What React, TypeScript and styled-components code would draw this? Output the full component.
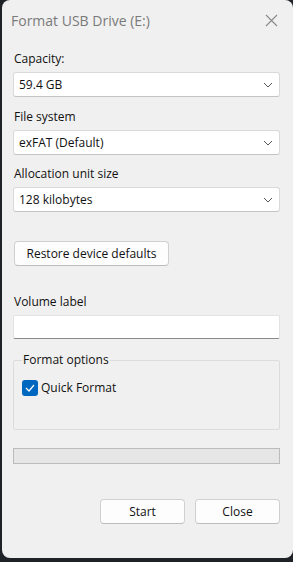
import styled, { createGlobalStyle } from "styled-components";

const Global = createGlobalStyle`
  html, body {
    margin: 0;
    padding: 0;
    background: #1f2327;
  }
  body {
    font-family: "Open Sans", "Noto Sans", sans-serif;
    font-size: 12px;
    color: #111;
  }
`;

const Window = styled.div`
  margin-left: 2px;
  width: 291px;
  height: 558px;
  background: #f0f0f0;
  border-radius: 8px;
  box-sizing: border-box;
  display: flex;
  flex-direction: column;
  overflow: hidden;
`;

const TitleBar = styled.div`
  height: 40px;
  display: flex;
  align-items: center;
  justify-content: space-between;
  padding: 0 15px 0 9px;
`;

const Title = styled.span`
  font-size: 14px;
  color: #7a7a7a;
`;

const CloseX = styled.svg`
  width: 13px;
  height: 13px;
`;

const Body = styled.div`
  flex: 1;
  display: flex;
  flex-direction: column;
  padding: 6px 13px 0 11px;
`;

const Label = styled.div<{ $top?: number }>`
  margin-top: ${(p) => p.$top ?? 0}px;
  height: 20px;
  line-height: 20px;
  padding-left: 1px;
`;

const Select = styled.div`
  margin-top: 3px;
  height: 25px;
  box-sizing: border-box;
  background: #fff;
  border: 1px solid #d9d9d9;
  border-bottom-color: #c4c4c4;
  border-radius: 3px;
  display: flex;
  align-items: center;
  justify-content: space-between;
  padding: 0 6px 0 5px;
`;

const Chevron = styled.svg`
  width: 10px;
  height: 6px;
`;

const Button = styled.div<{ $w: number }>`
  width: ${(p) => p.$w}px;
  height: 25px;
  box-sizing: border-box;
  background: #fdfdfd;
  border: 1px solid #d0d0d0;
  border-bottom-color: #bdbdbd;
  border-radius: 4px;
  display: flex;
  align-items: center;
  justify-content: center;
`;

const RestoreRow = styled.div`
  margin-top: 29px;
  padding-left: 1px;
`;

const TextInput = styled.div`
  margin-top: 3px;
  height: 24px;
  background: #fff;
  border: 1px solid #e3e3e3;
  border-bottom: 1px solid #8a8a8a;
  box-sizing: border-box;
  border-radius: 2px;
`;

const Group = styled.fieldset`
  margin: 14px 0 0 0;
  height: 77px;
  box-sizing: border-box;
  border: 1px solid #dcdcdc;
  border-radius: 2px;
  padding: 0 8px;
`;

const Legend = styled.legend`
  padding: 0 1px;
  margin-left: 0;
  line-height: 14px;
`;

const CheckRow = styled.div`
  margin-top: 12px;
  display: flex;
  align-items: center;
  gap: 3px;
`;

const Box = styled.div`
  width: 16px;
  height: 16px;
  background: #0067c0;
  border-radius: 3px;
  display: flex;
  align-items: center;
  justify-content: center;
`;

const Progress = styled.div`
  margin-top: 18px;
  height: 16px;
  box-sizing: border-box;
  background: #e6e6e6;
  border: 1px solid #bcbcbc;
`;

const Footer = styled.div`
  margin-top: 35px;
  display: flex;
  justify-content: flex-end;
  gap: 10px;
`;

function Dropdown({ value }: { value: string }) {
  return (
    <Select>
      <span>{value}</span>
      <Chevron viewBox="0 0 10 6">
        <path d="M1 1l4 4 4-4" fill="none" stroke="#555" strokeWidth="1" />
      </Chevron>
    </Select>
  );
}

export default function App() {
  return (
    <>
      <Global />
      <Window>
        <TitleBar>
          <Title>Format USB Drive (E:)</Title>
          <CloseX viewBox="0 0 13 13">
            <path d="M1 1l11 11M12 1L1 12" stroke="#8a8a8a" strokeWidth="1.1" />
          </CloseX>
        </TitleBar>
        <Body>
          <Label $top={3}>Capacity:</Label>
          <Dropdown value="59.4 GB" />
          <Label $top={10}>File system</Label>
          <Dropdown value="exFAT (Default)" />
          <Label $top={9}>Allocation unit size</Label>
          <Dropdown value="128 kilobytes" />
          <RestoreRow>
            <Button $w={155}>Restore device defaults</Button>
          </RestoreRow>
          <Label $top={26}>Volume label</Label>
          <TextInput />
          <Group>
            <Legend>Format options</Legend>
            <CheckRow>
              <Box>
                <svg width="10" height="8" viewBox="0 0 10 8">
                  <path d="M1 4l3 3 5-6" fill="none" stroke="#fff" strokeWidth="1.2" />
                </svg>
              </Box>
              <span>Quick Format</span>
            </CheckRow>
          </Group>
          <Progress />
          <Footer>
            <Button $w={85}>Start</Button>
            <Button $w={85}>Close</Button>
          </Footer>
        </Body>
      </Window>
    </>
  );
}
